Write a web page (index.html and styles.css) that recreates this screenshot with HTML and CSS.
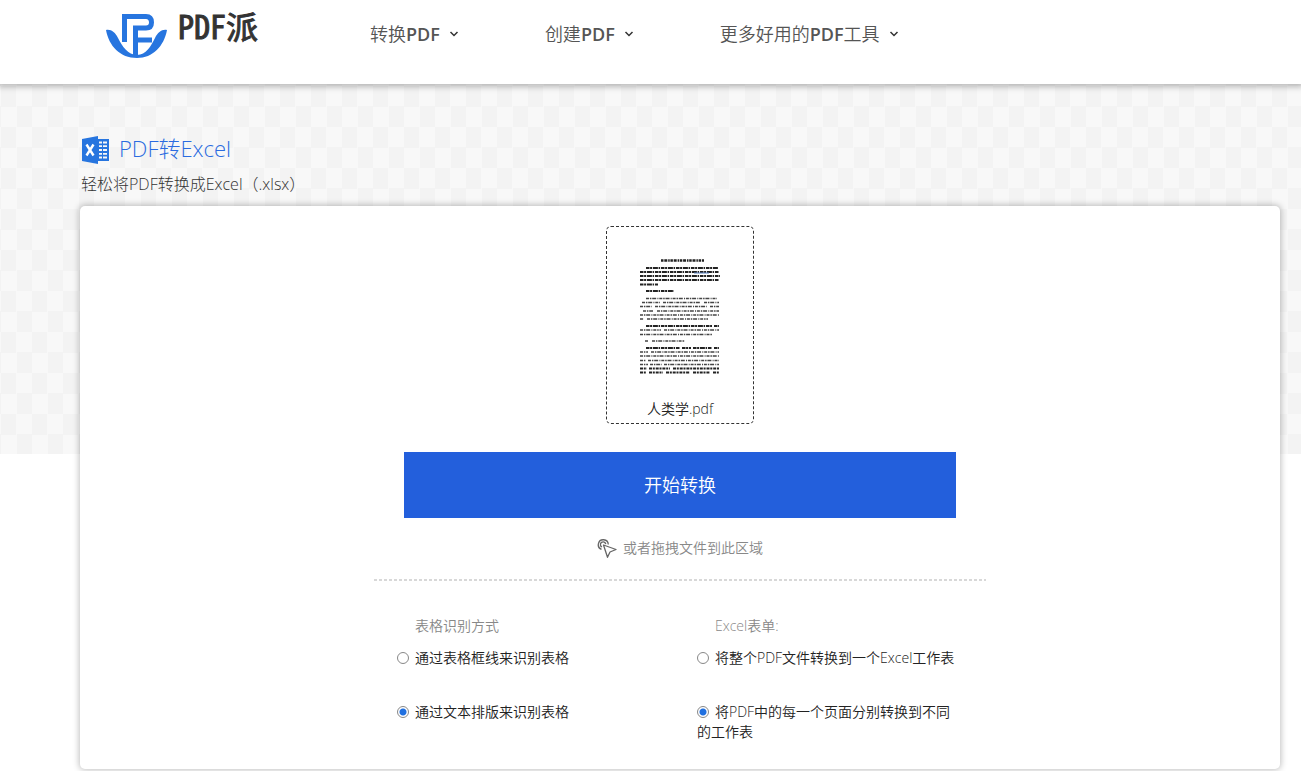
FILE: index.html
```html
<!DOCTYPE html>
<html lang="zh-CN">
<head>
<meta charset="utf-8">
<meta name="viewport" content="width=device-width, initial-scale=1">
<title>PDF转Excel - PDF派</title>
<link rel="stylesheet" href="styles.css">
</head>
<body>
<header class="header">
  <a class="brand" href="#">
    <svg class="brand-mark" viewBox="0 0 61 45" aria-hidden="true">
      <path d="M0 17C5 16 9 19 12 25C16 33 22 42 31 42C40 42 45 33 49 25C52 19 56 16 61 17C58 33 47 45 31 45C14 45 3 33 0 17Z" fill="#2775df"/>
      <path d="M18.500 29V3.500H40Q45.500 3.500 45.500 9.500Q45.500 15 40 15H29.500V44" fill="none" stroke="#2775df" stroke-width="5"/>
      <path d="M30 27H46" fill="none" stroke="#2775df" stroke-width="5"/>
    </svg>
    <span class="brand-name">PDF派</span>
  </a>
  <nav class="nav">
    <a class="nav-link" href="#">转换<span class="nav-latin">PDF</span><svg class="chevron" viewBox="0 0 10 8" aria-hidden="true"><path d="M1.500 2L5 5.500L8.500 2"/></svg></a>
    <a class="nav-link" href="#">创建<span class="nav-latin">PDF</span><svg class="chevron" viewBox="0 0 10 8" aria-hidden="true"><path d="M1.500 2L5 5.500L8.500 2"/></svg></a>
    <a class="nav-link" href="#">更多好用的<span class="nav-latin">PDF</span>工具<svg class="chevron" viewBox="0 0 10 8" aria-hidden="true"><path d="M1.500 2L5 5.500L8.500 2"/></svg></a>
  </nav>
</header>
<main class="main">
  <div class="heading">
    <svg class="excel-icon" viewBox="0 0 28 28" aria-hidden="true">
      <path d="M0 3L16 0V28L0 25Z" fill="#2775df"/>
      <path d="M16 3H27V25H16Z" fill="#2775df"/>
      <path d="M17 6.500H25M17 10.200H25M17 14H25M17 17.800H25M17 21.500H25" stroke="#f7f7f7" stroke-width="1.800"/>
      <path d="M20.500 5V23" stroke="#2775df" stroke-width="1"/>
      <path d="M4.500 8.500L11.500 19.500M11.500 8.500L4.500 19.500" stroke="#fff" stroke-width="2.400"/>
    </svg>
    <h1 class="title">PDF转Excel</h1>
  </div>
  <p class="subtitle">轻松将PDF转换成Excel（.xlsx）</p>
  <form class="card">
    <figure class="file">
      <svg class="preview" viewBox="0 0 80 116" role="img" aria-label="文件预览">
        <g fill="none" stroke="#222" stroke-width="1.800">
          <path d="M21 2.500H64" stroke-width="2.500" stroke-dasharray="2.500 .8 3 .9 1.500 .7"/>
          <g stroke-dasharray="3.500 .6 2 .8 5 .7 1.500 .9">
            <path d="M6 10H78M0 14H79M0 18H80M0 22H79M0 26.500H18"/>
            <path d="M6 33H34"/>
            <path d="M6 68H72M74 68H79"/>
            <path d="M6 90H40M42 90H51M53 90H72M74 90H79"/>
          </g>
          <g stroke="#444" stroke-width="1.600" stroke-dasharray="3 .9 1.500 .8 4 1.200 1 .9">
            <path d="M6 40.500H77M2 44.500H20M23 44.500H61M64 44.500H79M0 48.500H12M15 48.500H67M70 48.500H79M3 53H13M17 53H79M0 57H79M0 61H4M7 61H68"/>
            <path d="M0 72H21M24 72H79M0 76.500H72"/>
            <path d="M5 83H8M12 83H45"/>
            <path d="M0 94H8M11 94H79M0 98H79M0 102.500H6M8 102.500H79M0 106.500H8M10 106.500H22M24 106.500H79"/>
          </g>
          <path d="M0 110.500H7M9 110.500H30M33 110.500H79M0 114.500H6M9 114.500H23M26 114.500H50M53 114.500H70M73 114.500H79" stroke-dasharray="3 .8 2 .9"/>
          <path d="M54 15H69" stroke="#5b83c4" stroke-width="1"/>
        </g>
      </svg>
      <figcaption class="file-name">人类学.pdf</figcaption>
    </figure>
    <button class="start" type="button">开始转换</button>
    <p class="hint">
      <svg class="cursor-icon" viewBox="0 0 20 20" aria-hidden="true">
        <g fill="none" stroke="#666" stroke-width="1.300">
          <path d="M4.500 11.400A5 5 0 1 1 11.300 6.500"/>
          <path d="M5 9A2.700 2.700 0 1 1 8.800 6.200"/>
          <path d="M6.500 7L19 11.500L13 14L10.500 19.300Z" stroke-linejoin="round"/>
        </g>
      </svg>
      <span>或者拖拽文件到此区域</span>
    </p>
    <hr class="divider">
    <div class="options">
      <fieldset class="group">
        <legend class="legend">表格识别方式</legend>
        <label class="choice"><input class="radio" type="radio" name="detect">通过表格框线来识别表格</label>
        <label class="choice"><input class="radio" type="radio" name="detect" checked>通过文本排版来识别表格</label>
      </fieldset>
      <fieldset class="group">
        <legend class="legend">Excel表单:</legend>
        <label class="choice"><input class="radio" type="radio" name="sheet">将整个PDF文件转换到一个Excel工作表</label>
        <label class="choice"><input class="radio" type="radio" name="sheet" checked>将PDF中的每一个页面分别转换到不同的工作表</label>
      </fieldset>
    </div>
  </form>
</main>
</body>
</html>
```
FILE: styles.css
```css
* {
  box-sizing: border-box;
}

body {
  margin: 0;
  background: #fff;
  color: #222;
  font-family: "Open Sans", "Noto Sans CJK SC", sans-serif;
  font-size: 14px;
  font-weight: 350;
  line-height: 20px;
}

.header {
  position: relative;
  z-index: 1;
  display: flex;
  gap: 112px;
  height: 84px;
  padding: 0 20px 0 106px;
  background: #fff;
  box-shadow: 0 1px 6px 2px rgba(0, 0, 0, 0.25);
}

.brand {
  display: flex;
  gap: 11px;
  padding-top: 8px;
  color: #333;
  text-decoration: none;
}

.brand-mark {
  width: 61px;
  height: 45px;
  margin-top: 5px;
}

.brand-name {
  font-family: "Noto Sans Mono CJK SC", "Noto Sans CJK SC", sans-serif;
  font-size: 32px;
  font-weight: 400;
  line-height: 34px;
  -webkit-text-stroke: 1px #333;
}

.nav {
  display: flex;
  gap: 86px;
  padding-top: 22px;
}

.nav-link {
  display: flex;
  align-items: center;
  height: 24px;
  color: #555;
  font-size: 18px;
  text-decoration: none;
  white-space: nowrap;
}

.nav-latin {
  font-weight: 600;
}

.chevron {
  width: 10px;
  height: 8px;
  margin-left: 9px;
  fill: none;
  stroke: #333;
  stroke-width: 1.5;
}

.main {
  position: relative;
  padding: 50px 21px 2px 80px;
}

.main::before {
  content: "";
  position: absolute;
  z-index: -1;
  top: 0;
  left: 0;
  right: 0;
  height: 370px;
  background: conic-gradient(#f8f8f8 25%, #f3f3f3 0 50%, #f8f8f8 0 75%, #f3f3f3 0) 1px 2px / 31px 41px;
}

.heading {
  display: flex;
  align-items: center;
  gap: 9px;
  height: 32px;
  padding-left: 2px;
}

.excel-icon {
  width: 28px;
  height: 28px;
}

.title {
  margin: 0;
  padding-bottom: 3px;
  color: #2a6be0;
  font-size: 22px;
  font-weight: 300;
  line-height: 29px;
}

.subtitle {
  margin: 6px 0 10px;
  padding-left: 1px;
  color: #333;
  font-size: 16px;
  font-weight: 300;
  line-height: 24px;
}

.card {
  display: flex;
  flex-direction: column;
  align-items: center;
  padding: 20px 20px 27px;
  border-radius: 5px;
  background: #fff;
  box-shadow: 0 0 6px 1px rgba(0, 0, 0, 0.25);
}

.file {
  display: flex;
  flex-direction: column;
  align-items: center;
  justify-content: space-between;
  width: 148px;
  height: 198px;
  margin: 0;
  padding: 31px 0 4px;
  border: 1px dashed #333;
  border-radius: 5px;
}

.preview {
  width: 80px;
  height: 116px;
}

.start {
  width: 100%;
  max-width: 552px;
  height: 66px;
  margin-top: 28px;
  border: 0;
  background: #235fdc;
  color: #fff;
  font: inherit;
  font-size: 18px;
}

.hint {
  display: flex;
  align-items: center;
  justify-content: center;
  gap: 6px;
  margin: 20px 0;
  color: #888;
}

.cursor-icon {
  width: 20px;
  height: 20px;
}

.divider {
  width: 100%;
  max-width: 612px;
  height: 2px;
  margin: 1px 0 35px;
  border: 0;
  background: repeating-linear-gradient(90deg, #d8d8d8 0 3px, #fff 3px 5px);
}

.options {
  display: grid;
  grid-template-columns: 260px 260px;
  gap: 40px;
  width: 100%;
  max-width: 566px;
}

.group {
  min-width: 0;
  margin: 0;
  padding: 0;
  border: 0;
}

.legend {
  padding: 0 0 12px 18px;
  color: #888;
}

.choice {
  display: block;
}

.choice + .choice {
  margin-top: 34px;
}

.radio {
  appearance: none;
  width: 12px;
  height: 12px;
  margin: 0 6px 0 0;
  border: 1px solid #888;
  border-radius: 50%;
  background: #fff;
  vertical-align: -1px;
}

.radio:checked {
  background: radial-gradient(circle, #2070e0 3px, #fff 4px);
}
```
